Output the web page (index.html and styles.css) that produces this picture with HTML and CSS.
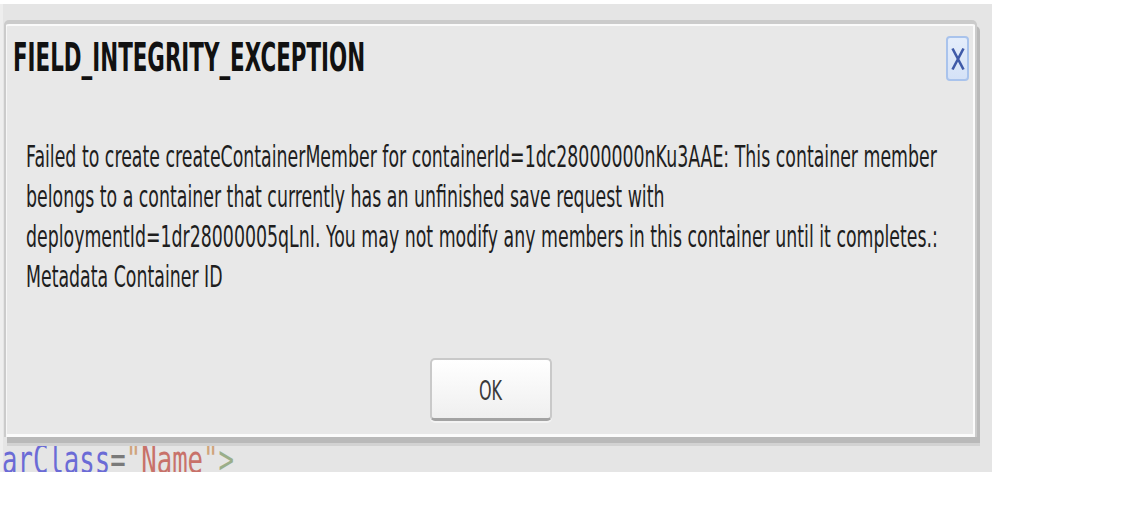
FILE: index.html
```html
<!DOCTYPE html>
<html lang="en">
<head>
<meta charset="utf-8">
<title>FIELD_INTEGRITY_EXCEPTION</title>
<link rel="stylesheet" href="styles.css">
</head>
<body>
<div class="screen">
  <div class="code"><span class="code-line"><span class="c-attr">arClass</span><span class="c-op">=</span><span class="c-q">"</span><span class="c-str">Name</span><span class="c-q">"</span><span class="c-tag">&gt;</span></span></div>
  <div class="dialog" role="dialog">
    <div class="dlg-head">
      <div class="dlg-title"><span class="title-text">FIELD_INTEGRITY_EXCEPTION</span></div>
      <button class="dlg-close" aria-label="Close">
        <svg class="close-x" width="14" height="24" viewBox="0 0 14 24"><path d="M1.5 1.5 L12.5 22.5 M12.5 1.5 L1.5 22.5" stroke="#3f5aa8" stroke-width="2.6" fill="none" stroke-linecap="butt"/></svg>
      </button>
    </div>
    <div class="dlg-msg"><p class="msg-text">Failed to create createContainerMember for containerId=1dc28000000nKu3AAE: This container member<br>belongs to a container that currently has an unfinished save request with<br>deploymentId=1dr28000005qLnI. You may not modify any members in this container until it completes.:<br>Metadata Container ID</p></div>
    <div class="dlg-foot"><button class="ok-btn"><span class="ok-label">OK</span></button></div>
  </div>
</div>
</body>
</html>
```
FILE: styles.css
```css
html, body {
  margin: 0;
  padding: 0;
  background: #ffffff;
}

.screen {
  position: relative;
  width: 992px;
  height: 468px;
  margin-top: 4px;
  background: #e5e5e5;
  border-left: 3px solid #eeeeee;
  box-sizing: border-box;
  overflow: hidden;
}

.code {
  padding-top: 437px;
  margin-left: -1px;
  font-family: "DejaVu Sans Mono", monospace;
  font-size: 25.7px;
  line-height: 25.7px;
  white-space: pre;
}

.code-line {
  display: inline-block;
  transform: scaleY(1.5);
  transform-origin: 0 0;
}

.c-attr { color: #6b6bd6; }
.c-op { color: #7a7a7a; }
.c-q { color: #d0a47c; }
.c-str { color: #c8726a; }
.c-tag { color: #9aae8a; }

.dialog {
  position: absolute;
  left: 1px;
  top: 16px;
  width: 973px;
  height: 417px;
  box-sizing: border-box;
  display: flex;
  flex-direction: column;
  padding: 0 0 16px 0;
  background: #e8e8e8;
  border-style: solid;
  border-color: #cbcbcb;
  border-width: 4px 2px 0 2px;
  border-radius: 5px 5px 0 0;
  box-shadow:
    inset 0 2px 0 #fafafa,
    inset 1px 0 0 #f6f6f6,
    inset -2px 0 0 #fbfbfb,
    inset 0 -3px 0 #fbfbfb,
    3px 6px 0 #b9b9b9,
    3px 9px 0 #d2d2d2;
}

.dlg-head {
  display: flex;
  justify-content: space-between;
  align-items: flex-start;
  padding: 12px 6px 0 7px;
  height: 45px;
}

.dlg-title {
  margin-top: 2.3px;
  height: 40px;
  font-family: "DejaVu Sans", sans-serif;
  font-weight: bold;
  font-size: 21.4px;
  line-height: 21.4px;
  color: #111111;
  white-space: nowrap;
}

.title-text {
  display: block;
  transform: scaleY(1.86);
  transform-origin: 0 0;
}

.dlg-close {
  width: 23px;
  height: 45px;
  padding: 0;
  margin: 0;
  box-sizing: border-box;
  display: flex;
  align-items: center;
  justify-content: center;
  border: 2px solid #a9c3ec;
  border-radius: 4px;
  background: linear-gradient(#e4edfb, #d5e2f7);
}

.close-x {
  display: block;
}

.dlg-msg {
  margin: 55.6px 0 0 20px;
  width: 950px;
  height: 160px;
}

.msg-text {
  margin: 0;
  font-family: "DejaVu Sans", sans-serif;
  font-size: 17.37px;
  line-height: 23px;
  color: #1e1e1e;
  white-space: nowrap;
  transform: scaleY(1.74);
  transform-origin: 0 0;
}

.dlg-foot {
  margin-top: auto;
  display: flex;
  justify-content: center;
}

.ok-btn {
  width: 122px;
  height: 63px;
  box-sizing: border-box;
  padding: 0;
  display: flex;
  align-items: center;
  justify-content: center;
  border: 2px solid #c9c9c9;
  border-bottom: 3px solid #a3a3a3;
  border-radius: 5px;
  background: linear-gradient(#ffffff, #efefef);
  box-shadow: 0 2px 0 #f3f3f3;
  font-family: "DejaVu Sans", sans-serif;
  font-size: 16px;
  line-height: 16px;
  color: #3a3a3a;
}

.ok-label {
  display: inline-block;
  margin-top: 5px;
  transform: scaleY(1.63);
}
```
